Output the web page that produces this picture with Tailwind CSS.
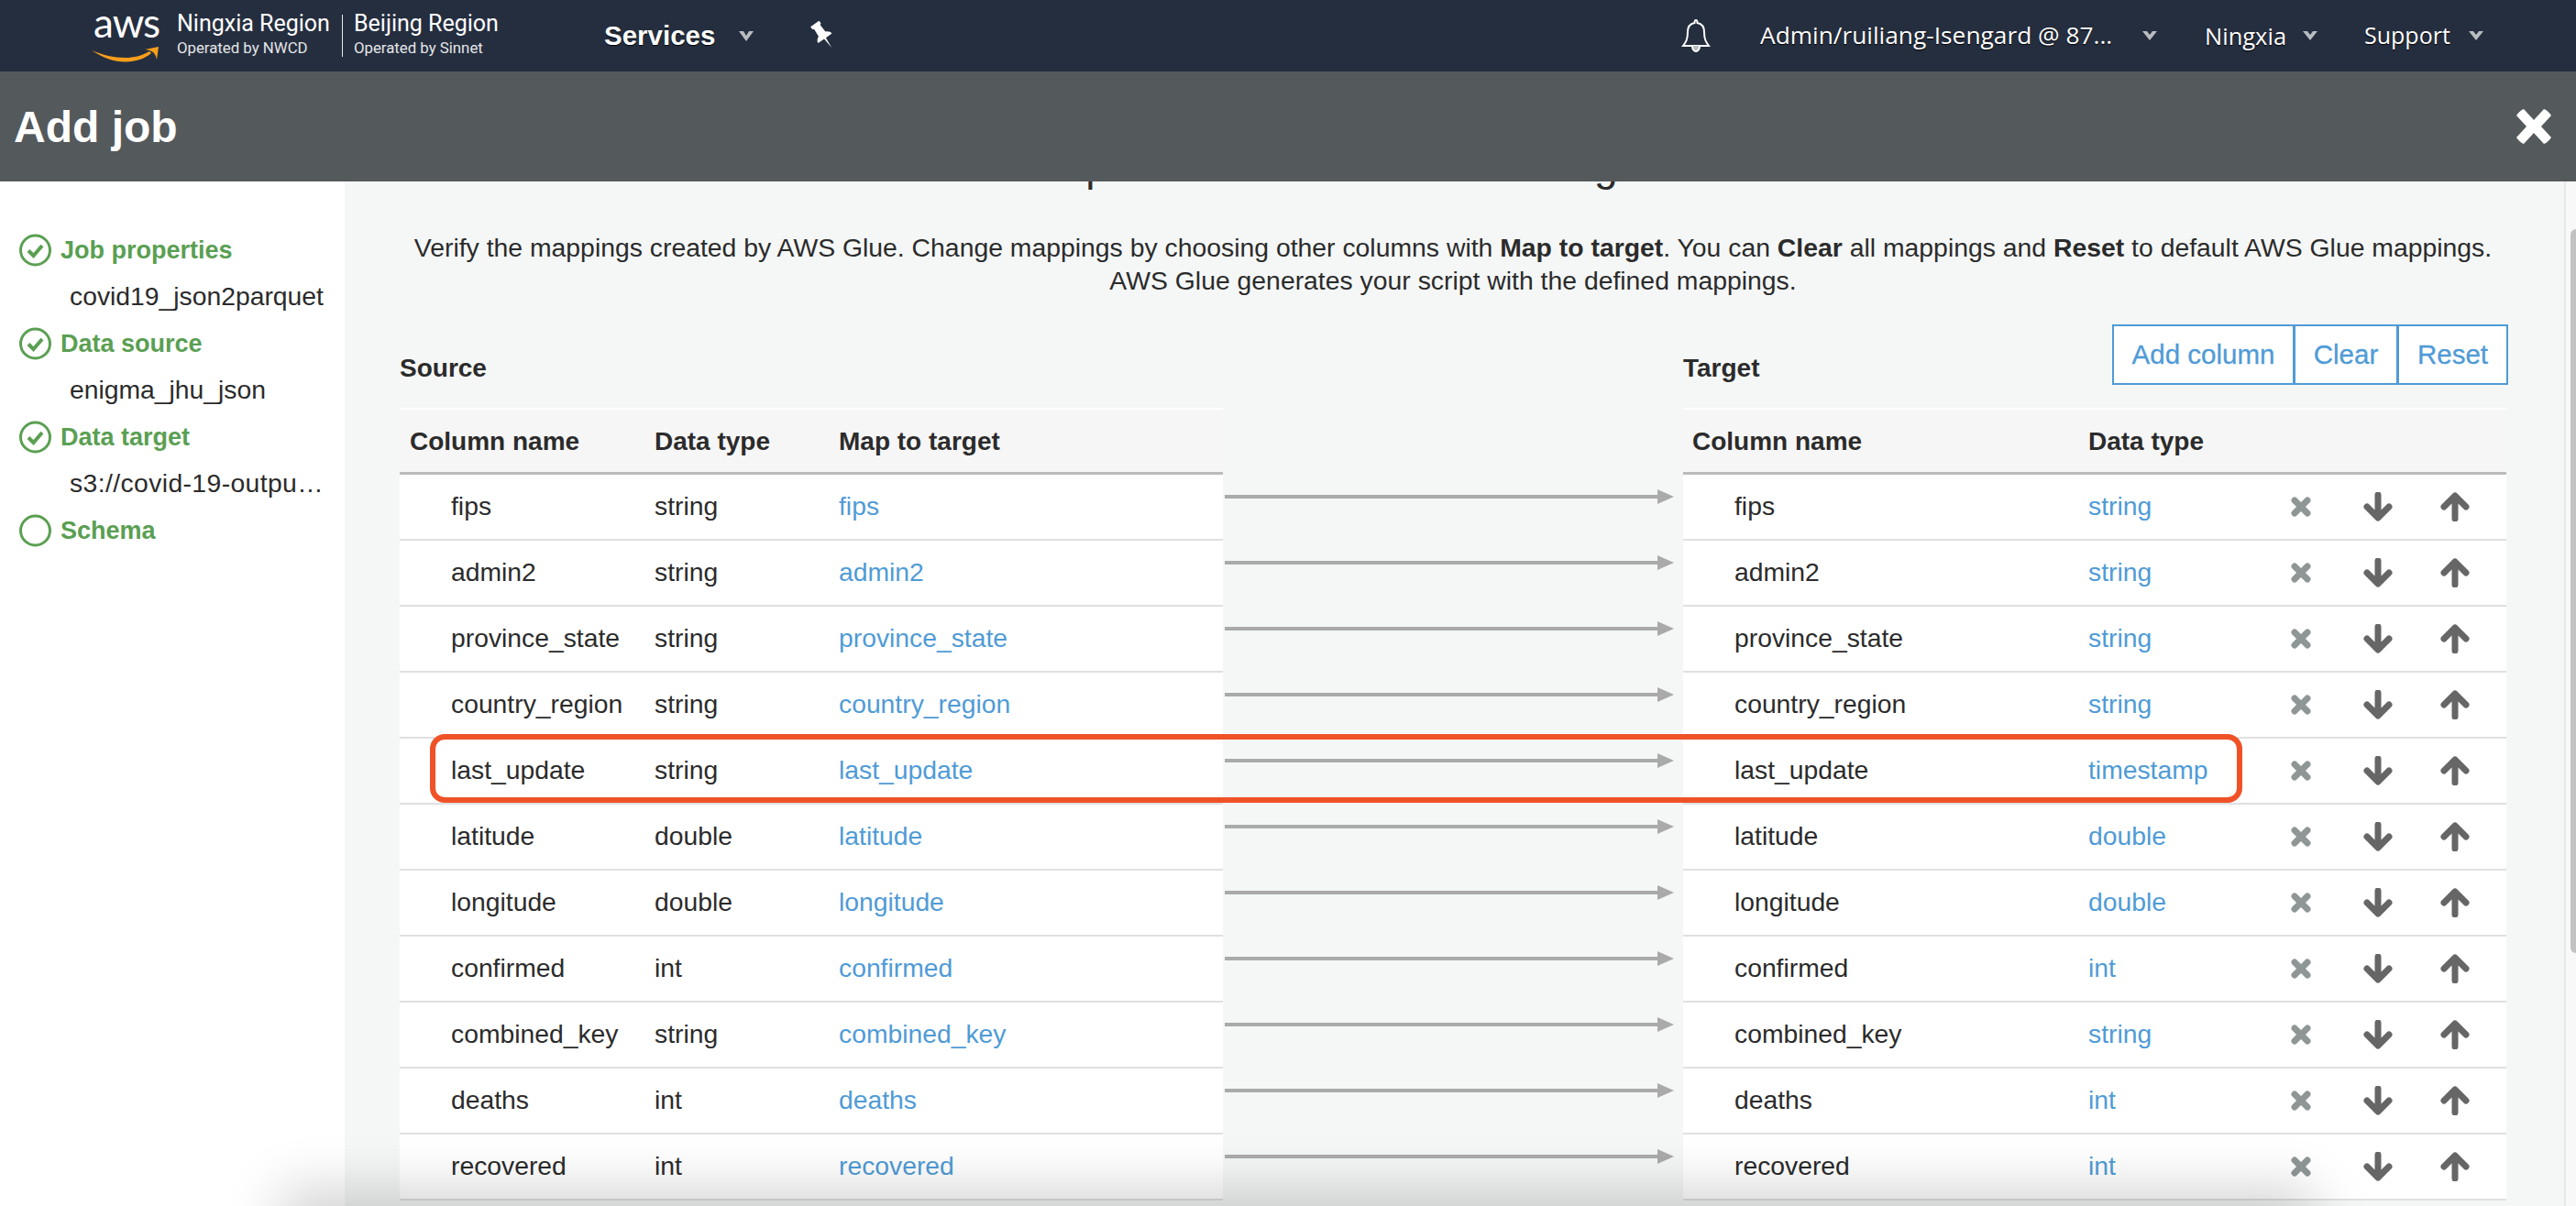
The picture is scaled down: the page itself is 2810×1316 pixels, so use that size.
<!DOCTYPE html>
<html>
<head>
<meta charset="utf-8">
<script src="https://cdn.jsdelivr.net/npm/@tailwindcss/browser@4"></script>
</head>
<body class="m-0">
<div class="relative w-[2810px] h-[1316px] overflow-hidden flex flex-col bg-white text-[#2b2b2b] font-['Liberation_Sans',sans-serif] text-[28.3px]">

  <header class="h-[78px] shrink-0 bg-[#252e3f] flex items-center text-white">
    <div class="relative w-[76px] h-[60px] ml-[100px] shrink-0">
      <span class="absolute left-[2px] top-[-5px] font-['Lato',sans-serif] text-[44px] leading-[40px] tracking-[-1px]">aws</span>
      <svg class="absolute left-0 top-[32px]" width="76" height="28" viewBox="0 0 76 28" fill="none"><path d="M0 14 C12 22 24 26.5 37 26.5 C48 26.5 58 23 65 17 L63 15 C54 20 46 22 37 22 C24 22 12 19 0 14Z" fill="#f79e1b"/><path d="M58 13 L73 10 L71 24 C70 20 69 18 67 16 C64 14 61 13 58 13Z" fill="#f79e1b"/></svg>
    </div>
    <div class="ml-[17px] w-[180px] pb-[4px] font-['Roboto',sans-serif] shrink-0">
      <div class="text-[25px] leading-[28px]">Ningxia Region</div>
      <div class="text-[16.8px] leading-[22px] mt-[1px] text-[#e4e6e8]">Operated by NWCD</div>
    </div>
    <div class="w-[1px] h-[46px] bg-[#e8e8e8] shrink-0"></div>
    <div class="ml-[12px] w-[273px] pb-[4px] font-['Roboto',sans-serif] shrink-0">
      <div class="text-[25px] leading-[28px]">Beijing Region</div>
      <div class="text-[16.8px] leading-[22px] mt-[1px] text-[#e4e6e8]">Operated by Sinnet</div>
    </div>
    <span class="font-bold text-[29.5px] w-[147px] shrink-0 [text-shadow:0_1px_1px_#000]">Services</span>
    <svg class="shrink-0" width="16" height="11" viewBox="0 0 16 11"><path d="M0 0 L5 0 L8 5 L11 0 L16 0 L8 11Z" fill="#b9bcc0"/></svg>
    <svg class="ml-[61px] shrink-0" width="30" height="32" viewBox="0 0 26 28"><g transform="rotate(-35 13 14)"><path d="M8 0 H18 V3 L16.5 4 L17 12 C19.500 13 21 15 21 17 H14 L13 28 L12 17 H5 C5 15 6.500 13 9 12 L9.500 4 L8 3Z" fill="#fff"/></g></svg>
    <svg class="ml-[921px] shrink-0" width="32" height="36" viewBox="0 0 32 36" fill="none" stroke="#fff" stroke-width="2"><path d="M16 1 C17 1 17.500 2.500 17.500 4 C23 5 25 9 25 14 C25 22 27 25 30 29 H2 C5 25 7 22 7 14 C7 9 9 5 14.500 4 C14.500 2.500 15 1 16 1Z"/><path d="M12 29 C12 33 14 35 16 35 C18 35 20 33 20 29" fill="#b9bcc0"/></svg>
    <span class="ml-[54px] w-[417px] shrink-0 font-['Open_Sans',sans-serif] text-[26.3px] whitespace-nowrap [text-shadow:0_1px_1px_#000]">Admin/ruiliang-Isengard @ 87...</span>
    <svg class="shrink-0" width="16" height="10" viewBox="0 0 16 10"><path d="M0 0 L5 0 L8 4 L11 0 L16 0 L8 10Z" fill="#b9bcc0"/></svg>
    <span class="ml-[52px] w-[107px] shrink-0 font-['Open_Sans',sans-serif] text-[25.5px] [text-shadow:0_1px_1px_#000]">Ningxia</span>
    <svg class="shrink-0" width="16" height="10" viewBox="0 0 16 10"><path d="M0 0 L5 0 L8 4 L11 0 L16 0 L8 10Z" fill="#b9bcc0"/></svg>
    <span class="ml-[51px] w-[114px] shrink-0 font-['Open_Sans',sans-serif] text-[25px] [text-shadow:0_1px_1px_#000]">Support</span>
    <svg class="shrink-0" width="16" height="10" viewBox="0 0 16 10"><path d="M0 0 L5 0 L8 4 L11 0 L16 0 L8 10Z" fill="#b9bcc0"/></svg>
  </header>

  <div class="h-[120px] shrink-0 bg-[#54595c] flex items-center justify-between pl-[15px] pr-[27px] text-white">
    <h1 class="font-bold text-[48px] leading-none pt-[2px]">Add job</h1>
    <svg width="38" height="38" viewBox="0 0 38 38"><path d="M8 0 L19 12 L30 0 C33 1 36 4 38 7 L27 19 L38 31 C36 34 33 37 30 38 L19 26 L8 38 C5 37 2 34 0 31 L11 19 L0 7 C2 4 5 1 8 0Z" fill="#fff"/></svg>
  </div>

  <div class="flex-1 flex min-h-0">
    <aside class="w-[376px] shrink-0 bg-white pt-[49px] pl-[21px]">
      <div class="flex items-center h-[51px] gap-[10px] text-[#5a9f52] font-bold text-[27px]">
        <svg width="35" height="36" viewBox="0 0 35 36" fill="none" stroke="#5a9f52"><circle cx="17.500" cy="18" r="16" stroke-width="3"/><path d="M10 18.500 L15.500 24 L25 13" stroke-width="4"/></svg>
        <span class="pt-[2px]">Job properties</span>
      </div>
      <div class="h-[51px] flex items-center pl-[55px]">covid19_json2parquet</div>
      <div class="flex items-center h-[51px] gap-[10px] text-[#5a9f52] font-bold text-[27px]">
        <svg width="35" height="36" viewBox="0 0 35 36" fill="none" stroke="#5a9f52"><circle cx="17.500" cy="18" r="16" stroke-width="3"/><path d="M10 18.500 L15.500 24 L25 13" stroke-width="4"/></svg>
        <span class="pt-[2px]">Data source</span>
      </div>
      <div class="h-[51px] flex items-center pl-[55px]">enigma_jhu_json</div>
      <div class="flex items-center h-[51px] gap-[10px] text-[#5a9f52] font-bold text-[27px]">
        <svg width="35" height="36" viewBox="0 0 35 36" fill="none" stroke="#5a9f52"><circle cx="17.500" cy="18" r="16" stroke-width="3"/><path d="M10 18.500 L15.500 24 L25 13" stroke-width="4"/></svg>
        <span class="pt-[2px]">Data target</span>
      </div>
      <div class="h-[51px] flex items-center pl-[55px] tracking-[0.4px] whitespace-nowrap">s3://covid-19-outpu…</div>
      <div class="flex items-center h-[51px] gap-[10px] text-[#5a9f52] font-bold text-[27px]">
        <svg width="35" height="36" viewBox="0 0 35 36" fill="none" stroke="#5a9f52"><circle cx="17.500" cy="18" r="16" stroke-width="3"/></svg>
        <span class="pt-[2px]">Schema</span>
      </div>
    </aside>

    <main class="relative flex-1 min-w-0 overflow-hidden bg-[#f5f7f7]">
      <div class="w-[2298px] ml-[60px]">
        <h2 class="-mt-[45px] h-[56px] pr-[50px] text-[46px] leading-[56px] text-center whitespace-nowrap">Map the source columns to target columns.</h2>
        <p class="mt-[43px] text-[28.36px] leading-[36px] text-center">Verify the mappings created by AWS Glue. Change mappings by choosing other columns with <b>Map to target</b>. You can <b>Clear</b> all mappings and <b>Reset</b> to default AWS Glue mappings.<br>AWS Glue generates your script with the defined mappings.</p>

        <div class="flex mt-[30px] text-[28px]">
          <div class="w-[898px] shrink-0 h-[66px] flex items-center pt-[30px] font-bold">Source</div>
          <div class="w-[502px] shrink-0"></div>
          <div class="w-[898px] shrink-0 h-[66px] flex items-center justify-between">
            <span class="font-bold pt-[30px]">Target</span>
            <div class="flex text-[#4f9bd6] text-[29.5px] [-webkit-text-stroke:0.3px_#4f9bd6] bg-white border-2 border-[#4f9bd6] h-[66px] mr-[-2px]">
              <span class="w-[198px] flex items-center justify-center border-r-[3px] border-[#4f9bd6]">Add column</span>
              <span class="w-[113px] flex items-center justify-center border-r-[3px] border-[#4f9bd6]">Clear</span>
              <span class="w-[117px] flex items-center justify-center">Reset</span>
            </div>
          </div>
        </div>

        <div class="flex mt-[25px]">
          <div class="w-[898px] shrink-0">
            <div class="h-[73px] flex items-center border-t-2 border-b-[3px] border-t-white border-b-[#bbbbbb] bg-[#f6f6f6] pl-[11px] pt-[2px] font-bold text-[28px]">
              <span class="w-[267px]">Column name</span><span class="w-[201px]">Data type</span><span>Map to target</span>
            </div>
            <div class="h-[72px] flex items-center border-b-2 border-[#e0e0e0] bg-white pb-[1px] pl-[56px]"><span class="w-[222px]">fips</span><span class="w-[201px]">string</span><span class="text-[#4f9bd6]">fips</span></div>
            <div class="h-[72px] flex items-center border-b-2 border-[#e0e0e0] bg-white pb-[1px] pl-[56px]"><span class="w-[222px]">admin2</span><span class="w-[201px]">string</span><span class="text-[#4f9bd6]">admin2</span></div>
            <div class="h-[72px] flex items-center border-b-2 border-[#e0e0e0] bg-white pb-[1px] pl-[56px]"><span class="w-[222px]">province_state</span><span class="w-[201px]">string</span><span class="text-[#4f9bd6]">province_state</span></div>
            <div class="h-[72px] flex items-center border-b-2 border-[#e0e0e0] bg-white pb-[1px] pl-[56px]"><span class="w-[222px]">country_region</span><span class="w-[201px]">string</span><span class="text-[#4f9bd6]">country_region</span></div>
            <div class="h-[72px] flex items-center border-b-2 border-[#e0e0e0] bg-white pb-[1px] pl-[56px]"><span class="w-[222px]">last_update</span><span class="w-[201px]">string</span><span class="text-[#4f9bd6]">last_update</span></div>
            <div class="h-[72px] flex items-center border-b-2 border-[#e0e0e0] bg-white pb-[1px] pl-[56px]"><span class="w-[222px]">latitude</span><span class="w-[201px]">double</span><span class="text-[#4f9bd6]">latitude</span></div>
            <div class="h-[72px] flex items-center border-b-2 border-[#e0e0e0] bg-white pb-[1px] pl-[56px]"><span class="w-[222px]">longitude</span><span class="w-[201px]">double</span><span class="text-[#4f9bd6]">longitude</span></div>
            <div class="h-[72px] flex items-center border-b-2 border-[#e0e0e0] bg-white pb-[1px] pl-[56px]"><span class="w-[222px]">confirmed</span><span class="w-[201px]">int</span><span class="text-[#4f9bd6]">confirmed</span></div>
            <div class="h-[72px] flex items-center border-b-2 border-[#e0e0e0] bg-white pb-[1px] pl-[56px]"><span class="w-[222px]">combined_key</span><span class="w-[201px]">string</span><span class="text-[#4f9bd6]">combined_key</span></div>
            <div class="h-[72px] flex items-center border-b-2 border-[#e0e0e0] bg-white pb-[1px] pl-[56px]"><span class="w-[222px]">deaths</span><span class="w-[201px]">int</span><span class="text-[#4f9bd6]">deaths</span></div>
            <div class="h-[72px] flex items-center border-b-2 border-[#e0e0e0] bg-white pb-[1px] pl-[56px]"><span class="w-[222px]">recovered</span><span class="w-[201px]">int</span><span class="text-[#4f9bd6]">recovered</span></div>
          </div>

          <div class="w-[502px] shrink-0 pt-[73px] pl-[2px]">
            <div class="h-[72px] pt-[14px]"><svg class="block" width="490" height="20" viewBox="0 0 490 20"><path d="M0 8 H472 V2 L490 10 L472 18 V12 H0Z" fill="#aaaaaa"/></svg></div>
            <div class="h-[72px] pt-[14px]"><svg class="block" width="490" height="20" viewBox="0 0 490 20"><path d="M0 8 H472 V2 L490 10 L472 18 V12 H0Z" fill="#aaaaaa"/></svg></div>
            <div class="h-[72px] pt-[14px]"><svg class="block" width="490" height="20" viewBox="0 0 490 20"><path d="M0 8 H472 V2 L490 10 L472 18 V12 H0Z" fill="#aaaaaa"/></svg></div>
            <div class="h-[72px] pt-[14px]"><svg class="block" width="490" height="20" viewBox="0 0 490 20"><path d="M0 8 H472 V2 L490 10 L472 18 V12 H0Z" fill="#aaaaaa"/></svg></div>
            <div class="h-[72px] pt-[14px]"><svg class="block" width="490" height="20" viewBox="0 0 490 20"><path d="M0 8 H472 V2 L490 10 L472 18 V12 H0Z" fill="#aaaaaa"/></svg></div>
            <div class="h-[72px] pt-[14px]"><svg class="block" width="490" height="20" viewBox="0 0 490 20"><path d="M0 8 H472 V2 L490 10 L472 18 V12 H0Z" fill="#aaaaaa"/></svg></div>
            <div class="h-[72px] pt-[14px]"><svg class="block" width="490" height="20" viewBox="0 0 490 20"><path d="M0 8 H472 V2 L490 10 L472 18 V12 H0Z" fill="#aaaaaa"/></svg></div>
            <div class="h-[72px] pt-[14px]"><svg class="block" width="490" height="20" viewBox="0 0 490 20"><path d="M0 8 H472 V2 L490 10 L472 18 V12 H0Z" fill="#aaaaaa"/></svg></div>
            <div class="h-[72px] pt-[14px]"><svg class="block" width="490" height="20" viewBox="0 0 490 20"><path d="M0 8 H472 V2 L490 10 L472 18 V12 H0Z" fill="#aaaaaa"/></svg></div>
            <div class="h-[72px] pt-[14px]"><svg class="block" width="490" height="20" viewBox="0 0 490 20"><path d="M0 8 H472 V2 L490 10 L472 18 V12 H0Z" fill="#aaaaaa"/></svg></div>
            <div class="h-[72px] pt-[14px]"><svg class="block" width="490" height="20" viewBox="0 0 490 20"><path d="M0 8 H472 V2 L490 10 L472 18 V12 H0Z" fill="#aaaaaa"/></svg></div>
          </div>

          <div class="w-[898px] shrink-0">
            <div class="h-[73px] flex items-center border-t-2 border-b-[3px] border-t-white border-b-[#bbbbbb] bg-[#f6f6f6] pl-[10px] pt-[2px] font-bold text-[28px]">
              <span class="w-[432px]">Column name</span><span>Data type</span>
            </div>
            <div class="h-[72px] flex items-center border-b-2 border-[#e0e0e0] bg-white pb-[1px] pl-[56px]"><span class="w-[386px]">fips</span><span class="w-[221px] text-[#4f9bd6]">string</span>
              <svg width="22" height="22" viewBox="0 0 22 22" fill="none" stroke="#8f9696" stroke-width="7" stroke-linecap="round" stroke-linejoin="round"><path d="M4 4 L18 18 M18 4 L4 18"/></svg>
              <svg class="ml-[57px]" width="32" height="32" viewBox="0 0 32 32" fill="none" stroke="#666666" stroke-width="7" stroke-linecap="round" stroke-linejoin="round"><path d="M16 3 V27 M4 16 L16 28 L28 16"/></svg>
              <svg class="ml-[52px]" width="32" height="32" viewBox="0 0 32 32" fill="none" stroke="#666666" stroke-width="7" stroke-linecap="round" stroke-linejoin="round"><path d="M16 29 V5 M4 16 L16 4 L28 16"/></svg></div>
            <div class="h-[72px] flex items-center border-b-2 border-[#e0e0e0] bg-white pb-[1px] pl-[56px]"><span class="w-[386px]">admin2</span><span class="w-[221px] text-[#4f9bd6]">string</span>
              <svg width="22" height="22" viewBox="0 0 22 22" fill="none" stroke="#8f9696" stroke-width="7" stroke-linecap="round" stroke-linejoin="round"><path d="M4 4 L18 18 M18 4 L4 18"/></svg>
              <svg class="ml-[57px]" width="32" height="32" viewBox="0 0 32 32" fill="none" stroke="#666666" stroke-width="7" stroke-linecap="round" stroke-linejoin="round"><path d="M16 3 V27 M4 16 L16 28 L28 16"/></svg>
              <svg class="ml-[52px]" width="32" height="32" viewBox="0 0 32 32" fill="none" stroke="#666666" stroke-width="7" stroke-linecap="round" stroke-linejoin="round"><path d="M16 29 V5 M4 16 L16 4 L28 16"/></svg></div>
            <div class="h-[72px] flex items-center border-b-2 border-[#e0e0e0] bg-white pb-[1px] pl-[56px]"><span class="w-[386px]">province_state</span><span class="w-[221px] text-[#4f9bd6]">string</span>
              <svg width="22" height="22" viewBox="0 0 22 22" fill="none" stroke="#8f9696" stroke-width="7" stroke-linecap="round" stroke-linejoin="round"><path d="M4 4 L18 18 M18 4 L4 18"/></svg>
              <svg class="ml-[57px]" width="32" height="32" viewBox="0 0 32 32" fill="none" stroke="#666666" stroke-width="7" stroke-linecap="round" stroke-linejoin="round"><path d="M16 3 V27 M4 16 L16 28 L28 16"/></svg>
              <svg class="ml-[52px]" width="32" height="32" viewBox="0 0 32 32" fill="none" stroke="#666666" stroke-width="7" stroke-linecap="round" stroke-linejoin="round"><path d="M16 29 V5 M4 16 L16 4 L28 16"/></svg></div>
            <div class="h-[72px] flex items-center border-b-2 border-[#e0e0e0] bg-white pb-[1px] pl-[56px]"><span class="w-[386px]">country_region</span><span class="w-[221px] text-[#4f9bd6]">string</span>
              <svg width="22" height="22" viewBox="0 0 22 22" fill="none" stroke="#8f9696" stroke-width="7" stroke-linecap="round" stroke-linejoin="round"><path d="M4 4 L18 18 M18 4 L4 18"/></svg>
              <svg class="ml-[57px]" width="32" height="32" viewBox="0 0 32 32" fill="none" stroke="#666666" stroke-width="7" stroke-linecap="round" stroke-linejoin="round"><path d="M16 3 V27 M4 16 L16 28 L28 16"/></svg>
              <svg class="ml-[52px]" width="32" height="32" viewBox="0 0 32 32" fill="none" stroke="#666666" stroke-width="7" stroke-linecap="round" stroke-linejoin="round"><path d="M16 29 V5 M4 16 L16 4 L28 16"/></svg></div>
            <div class="h-[72px] flex items-center border-b-2 border-[#e0e0e0] bg-white pb-[1px] pl-[56px]"><span class="w-[386px]">last_update</span><span class="w-[221px] text-[#4f9bd6]">timestamp</span>
              <svg width="22" height="22" viewBox="0 0 22 22" fill="none" stroke="#8f9696" stroke-width="7" stroke-linecap="round" stroke-linejoin="round"><path d="M4 4 L18 18 M18 4 L4 18"/></svg>
              <svg class="ml-[57px]" width="32" height="32" viewBox="0 0 32 32" fill="none" stroke="#666666" stroke-width="7" stroke-linecap="round" stroke-linejoin="round"><path d="M16 3 V27 M4 16 L16 28 L28 16"/></svg>
              <svg class="ml-[52px]" width="32" height="32" viewBox="0 0 32 32" fill="none" stroke="#666666" stroke-width="7" stroke-linecap="round" stroke-linejoin="round"><path d="M16 29 V5 M4 16 L16 4 L28 16"/></svg></div>
            <div class="h-[72px] flex items-center border-b-2 border-[#e0e0e0] bg-white pb-[1px] pl-[56px]"><span class="w-[386px]">latitude</span><span class="w-[221px] text-[#4f9bd6]">double</span>
              <svg width="22" height="22" viewBox="0 0 22 22" fill="none" stroke="#8f9696" stroke-width="7" stroke-linecap="round" stroke-linejoin="round"><path d="M4 4 L18 18 M18 4 L4 18"/></svg>
              <svg class="ml-[57px]" width="32" height="32" viewBox="0 0 32 32" fill="none" stroke="#666666" stroke-width="7" stroke-linecap="round" stroke-linejoin="round"><path d="M16 3 V27 M4 16 L16 28 L28 16"/></svg>
              <svg class="ml-[52px]" width="32" height="32" viewBox="0 0 32 32" fill="none" stroke="#666666" stroke-width="7" stroke-linecap="round" stroke-linejoin="round"><path d="M16 29 V5 M4 16 L16 4 L28 16"/></svg></div>
            <div class="h-[72px] flex items-center border-b-2 border-[#e0e0e0] bg-white pb-[1px] pl-[56px]"><span class="w-[386px]">longitude</span><span class="w-[221px] text-[#4f9bd6]">double</span>
              <svg width="22" height="22" viewBox="0 0 22 22" fill="none" stroke="#8f9696" stroke-width="7" stroke-linecap="round" stroke-linejoin="round"><path d="M4 4 L18 18 M18 4 L4 18"/></svg>
              <svg class="ml-[57px]" width="32" height="32" viewBox="0 0 32 32" fill="none" stroke="#666666" stroke-width="7" stroke-linecap="round" stroke-linejoin="round"><path d="M16 3 V27 M4 16 L16 28 L28 16"/></svg>
              <svg class="ml-[52px]" width="32" height="32" viewBox="0 0 32 32" fill="none" stroke="#666666" stroke-width="7" stroke-linecap="round" stroke-linejoin="round"><path d="M16 29 V5 M4 16 L16 4 L28 16"/></svg></div>
            <div class="h-[72px] flex items-center border-b-2 border-[#e0e0e0] bg-white pb-[1px] pl-[56px]"><span class="w-[386px]">confirmed</span><span class="w-[221px] text-[#4f9bd6]">int</span>
              <svg width="22" height="22" viewBox="0 0 22 22" fill="none" stroke="#8f9696" stroke-width="7" stroke-linecap="round" stroke-linejoin="round"><path d="M4 4 L18 18 M18 4 L4 18"/></svg>
              <svg class="ml-[57px]" width="32" height="32" viewBox="0 0 32 32" fill="none" stroke="#666666" stroke-width="7" stroke-linecap="round" stroke-linejoin="round"><path d="M16 3 V27 M4 16 L16 28 L28 16"/></svg>
              <svg class="ml-[52px]" width="32" height="32" viewBox="0 0 32 32" fill="none" stroke="#666666" stroke-width="7" stroke-linecap="round" stroke-linejoin="round"><path d="M16 29 V5 M4 16 L16 4 L28 16"/></svg></div>
            <div class="h-[72px] flex items-center border-b-2 border-[#e0e0e0] bg-white pb-[1px] pl-[56px]"><span class="w-[386px]">combined_key</span><span class="w-[221px] text-[#4f9bd6]">string</span>
              <svg width="22" height="22" viewBox="0 0 22 22" fill="none" stroke="#8f9696" stroke-width="7" stroke-linecap="round" stroke-linejoin="round"><path d="M4 4 L18 18 M18 4 L4 18"/></svg>
              <svg class="ml-[57px]" width="32" height="32" viewBox="0 0 32 32" fill="none" stroke="#666666" stroke-width="7" stroke-linecap="round" stroke-linejoin="round"><path d="M16 3 V27 M4 16 L16 28 L28 16"/></svg>
              <svg class="ml-[52px]" width="32" height="32" viewBox="0 0 32 32" fill="none" stroke="#666666" stroke-width="7" stroke-linecap="round" stroke-linejoin="round"><path d="M16 29 V5 M4 16 L16 4 L28 16"/></svg></div>
            <div class="h-[72px] flex items-center border-b-2 border-[#e0e0e0] bg-white pb-[1px] pl-[56px]"><span class="w-[386px]">deaths</span><span class="w-[221px] text-[#4f9bd6]">int</span>
              <svg width="22" height="22" viewBox="0 0 22 22" fill="none" stroke="#8f9696" stroke-width="7" stroke-linecap="round" stroke-linejoin="round"><path d="M4 4 L18 18 M18 4 L4 18"/></svg>
              <svg class="ml-[57px]" width="32" height="32" viewBox="0 0 32 32" fill="none" stroke="#666666" stroke-width="7" stroke-linecap="round" stroke-linejoin="round"><path d="M16 3 V27 M4 16 L16 28 L28 16"/></svg>
              <svg class="ml-[52px]" width="32" height="32" viewBox="0 0 32 32" fill="none" stroke="#666666" stroke-width="7" stroke-linecap="round" stroke-linejoin="round"><path d="M16 29 V5 M4 16 L16 4 L28 16"/></svg></div>
            <div class="h-[72px] flex items-center border-b-2 border-[#e0e0e0] bg-white pb-[1px] pl-[56px]"><span class="w-[386px]">recovered</span><span class="w-[221px] text-[#4f9bd6]">int</span>
              <svg width="22" height="22" viewBox="0 0 22 22" fill="none" stroke="#8f9696" stroke-width="7" stroke-linecap="round" stroke-linejoin="round"><path d="M4 4 L18 18 M18 4 L4 18"/></svg>
              <svg class="ml-[57px]" width="32" height="32" viewBox="0 0 32 32" fill="none" stroke="#666666" stroke-width="7" stroke-linecap="round" stroke-linejoin="round"><path d="M16 3 V27 M4 16 L16 28 L28 16"/></svg>
              <svg class="ml-[52px]" width="32" height="32" viewBox="0 0 32 32" fill="none" stroke="#666666" stroke-width="7" stroke-linecap="round" stroke-linejoin="round"><path d="M16 29 V5 M4 16 L16 4 L28 16"/></svg></div>
          </div>
        </div>
      </div>
      <div class="absolute left-[93px] top-[603px] w-[1977px] h-[75px] border-[6px] border-[#f05228] rounded-[16px]"></div>
    </main>

    <div class="w-[13px] shrink-0 border-l-2 border-[#e8e8e8] bg-[#f8f8f8] pt-[52px] pl-[5px]">
      <div class="w-[6px] h-[790px] bg-[#c2c2c2] rounded-l-[6px]"></div>
    </div>
  </div>

  <div class="absolute left-[330px] top-[1322px] w-[2170px] h-[40px] shadow-[0_0_60px_24px_rgba(0,0,0,0.18)]"></div>
</div>
</body>
</html>
